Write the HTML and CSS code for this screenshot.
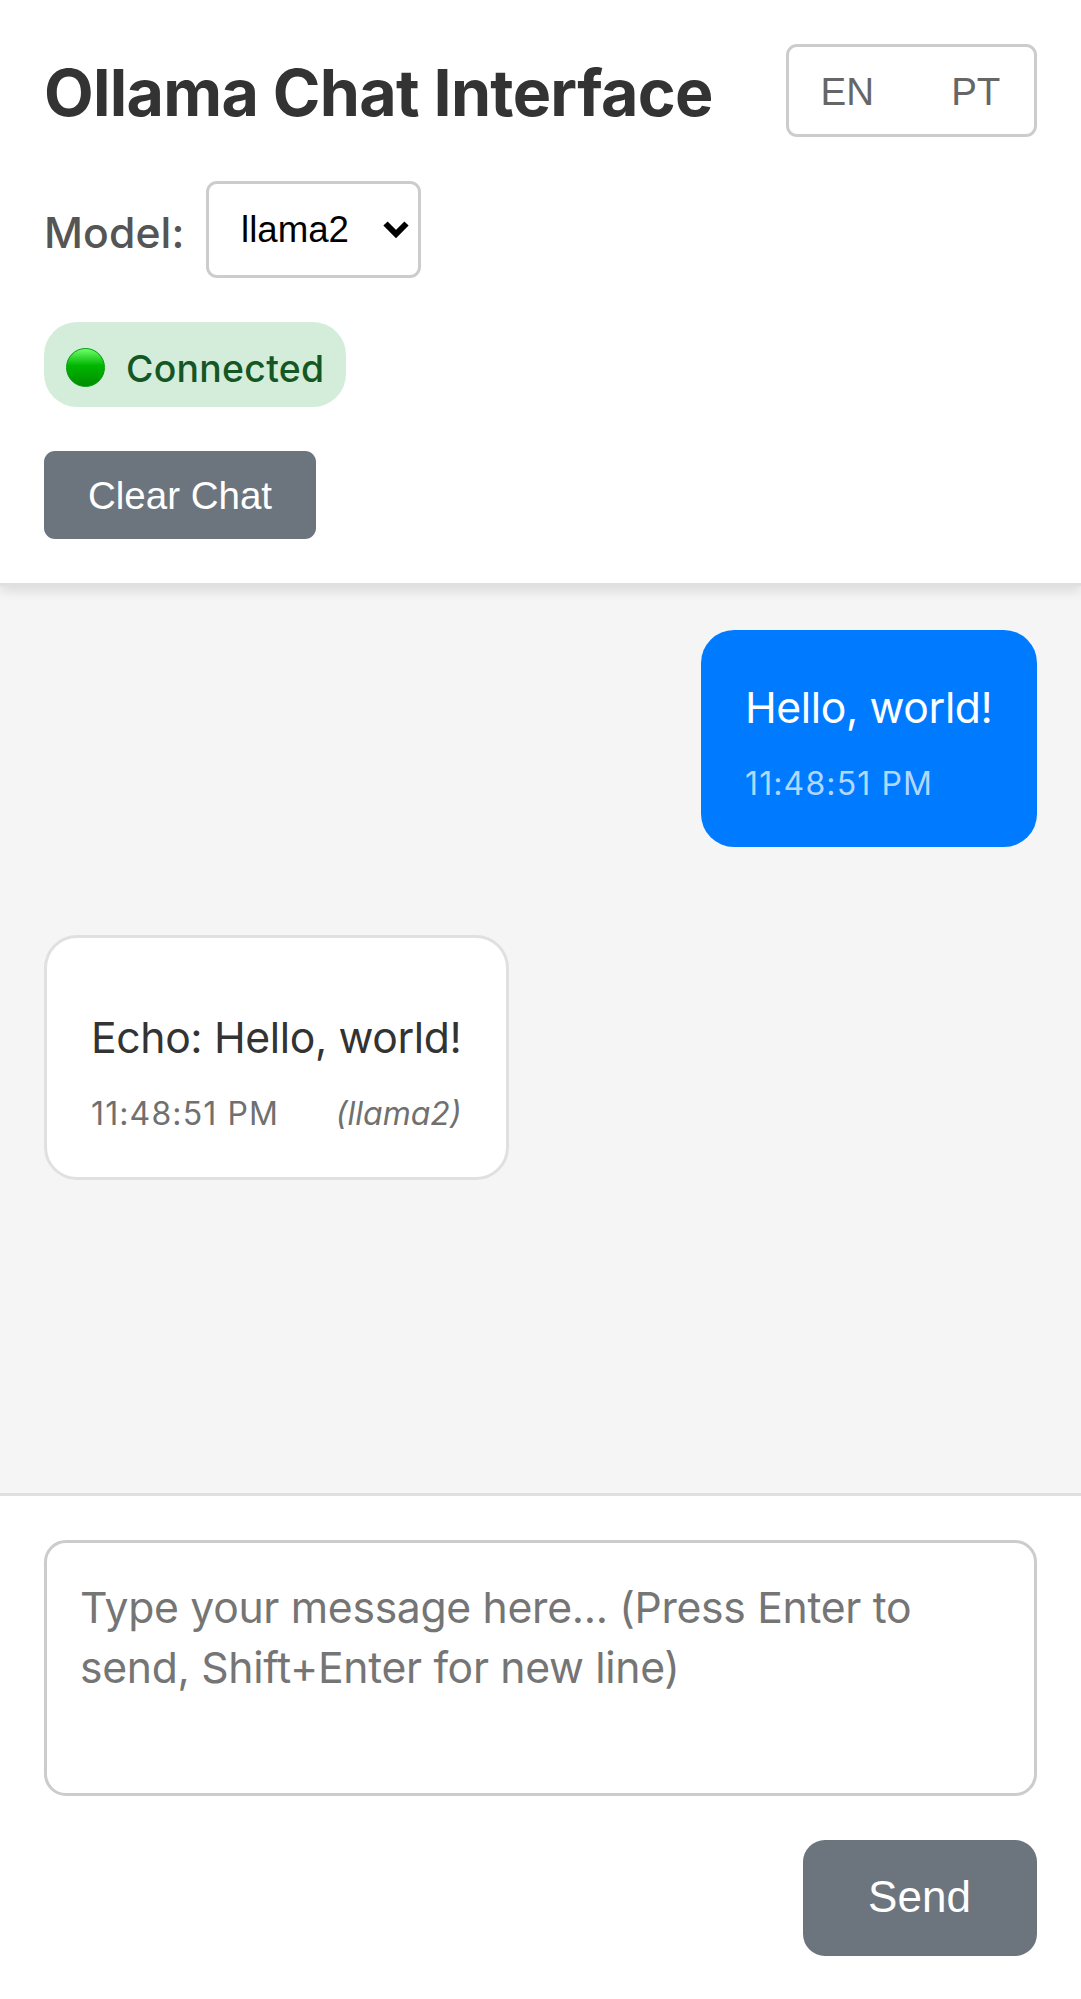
FILE: index.html
```html
<!DOCTYPE html>
<html lang="en">
<head>
<meta charset="utf-8">
<title>Ollama Chat Interface</title>
<link rel="stylesheet" href="styles.css">
</head>
<body>
<div class="app">
  <header class="header">
    <div class="header-top">
      <h1 class="title">Ollama Chat Interface</h1>
      <div class="languages">
        <button class="language">EN</button>
        <button class="language">PT</button>
      </div>
    </div>
    <div class="model">
      <label class="model-label" for="model">Model:</label>
      <div class="select-wrap">
        <select class="select" id="model"><option>llama2</option></select>
        <svg class="chevron" viewBox="0 0 26 17"><path d="M2.500 2.500 13 13 23.500 2.500" fill="none" stroke="#000" stroke-width="6"/></svg>
      </div>
    </div>
    <div class="status"><span class="dot"></span><span class="status-text">Connected</span></div>
    <button class="clear">Clear Chat</button>
  </header>
  <main class="messages">
    <article class="message user">
      <p class="text">Hello, world!</p>
      <div class="meta"><time class="time">11:48:51 PM</time></div>
    </article>
    <article class="message bot">
      <p class="text">Echo: Hello, world!</p>
      <div class="meta"><time class="time">11:48:51 PM</time><em class="model-name">(llama2)</em></div>
    </article>
  </main>
  <footer class="composer">
    <textarea class="input" placeholder="Type your message here... (Press Enter to send, Shift+Enter for new line)"></textarea>
    <button class="send">Send</button>
  </footer>
</div>
</body>
</html>
```
FILE: styles.css
```css
* { box-sizing: border-box; }
body {
  margin: 0;
  background: #f5f5f5;
  color: #333;
  font: 42.7px/1.5 Inter, "Liberation Sans", sans-serif;
}
button, select { font-family: "Liberation Sans", Arial, sans-serif; margin: 0; }
.app { display: flex; flex-direction: column; height: 1999px; }
.header {
  display: flex;
  flex-direction: column;
  align-items: flex-start;
  height: 586px;
  padding: 44px;
  background: #fff;
  border-bottom: 3px solid #e0e0e0;
  box-shadow: 0 5.5px 11px rgba(0, 0, 0, .1);
}
.header-top { display: flex; justify-content: space-between; align-items: center; width: 100%; height: 93px; }
.title { margin: 4px 0 0; font-size: 64.5px; font-weight: 700; line-height: 80px; letter-spacing: -.7px; white-space: nowrap; }
.languages {
  display: flex;
  gap: 12px;
  width: 251px;
  height: 93px;
  border: 3px solid #ccc;
  border-radius: 11px;
}
.language { flex: 1; padding: 2px 0 0; border: 0; background: none; color: #666; font-size: 38.5px; line-height: 85px; }
.model { display: flex; align-items: center; gap: 22px; height: 97px; margin-top: 44px; }
.model-label { width: 140px; padding-top: 7px; color: #555; font-weight: 450; letter-spacing: .1px; white-space: nowrap; }
.select-wrap { position: relative; width: 215px; height: 97px; }
.select {
  width: 100%;
  height: 100%;
  padding: 0 0 0 32px;
  border: 3px solid #ccc;
  border-radius: 11px;
  background: #fff;
  color: #000;
  font-size: 36.67px;
  appearance: none;
}
.chevron { position: absolute; right: 12px; top: 40px; width: 26px; height: 17px; }
.status {
  display: flex;
  align-items: center;
  gap: 21px;
  width: 302px;
  height: 85px;
  margin-top: 44px;
  padding-left: 22px;
  border-radius: 33px;
  background: #d4edda;
  color: #155724;
  font-size: 37.4px;
  font-weight: 500;
  letter-spacing: .28px;
}
.dot {
  width: 39px;
  height: 39px;
  margin-top: 6px;
  border: 1.5px solid #009e05;
  border-radius: 50%;
  background: linear-gradient(#6eff6e 0%, #3fe23f 18%, #00b400 45%, #00a800 65%, #008d00 100%);
}
.status-text { padding-top: 9px; }
.clear {
  width: 272px;
  height: 88px;
  margin-top: 44px;
  padding: 2px 0 0;
  border: 0;
  border-radius: 11px;
  background: #6c757d;
  color: #fff;
  font-size: 38.5px;
}
.messages { display: flex; flex: 1; flex-direction: column; gap: 88px; padding: 44px; }
.message { border-radius: 33px; }
.text { margin: 0; line-height: 66px; letter-spacing: -.38px; white-space: nowrap; }
.meta { display: flex; justify-content: space-between; margin-top: 18px; font-size: 32px; line-height: 50px; white-space: nowrap; }
.time { letter-spacing: 1.12px; }
.user { align-self: flex-end; width: 336px; height: 217px; padding: 45px 44px 0; background: #007bff; color: #fff; }
.user .meta { color: #b2d7ff; }
.bot { align-self: flex-start; width: 464.5px; height: 244.5px; padding: 67px 44px 0; border: 3px solid #e0e0e0; background: #fff; }
.bot .meta { color: #707070; }
.composer {
  display: flex;
  flex-direction: column;
  align-items: flex-end;
  gap: 44px;
  height: 506px;
  padding: 44px 44px 43px;
  border-top: 3px solid #e0e0e0;
  background: #fff;
}
.input {
  display: block;
  width: 100%;
  height: 256px;
  padding: 35px 33px 30px;
  border: 3px solid #ccc;
  border-radius: 22px;
  background: #fff;
  font: 42.7px/60px Inter, "Liberation Sans", sans-serif;
  letter-spacing: -.32px;
  resize: none;
}
.input::placeholder { color: #757575; }
.send { width: 234px; height: 116px; padding: 0 1px 3px 0; border: 0; border-radius: 22px; background: #6c757d; color: #fff; font-size: 44px; }
```
